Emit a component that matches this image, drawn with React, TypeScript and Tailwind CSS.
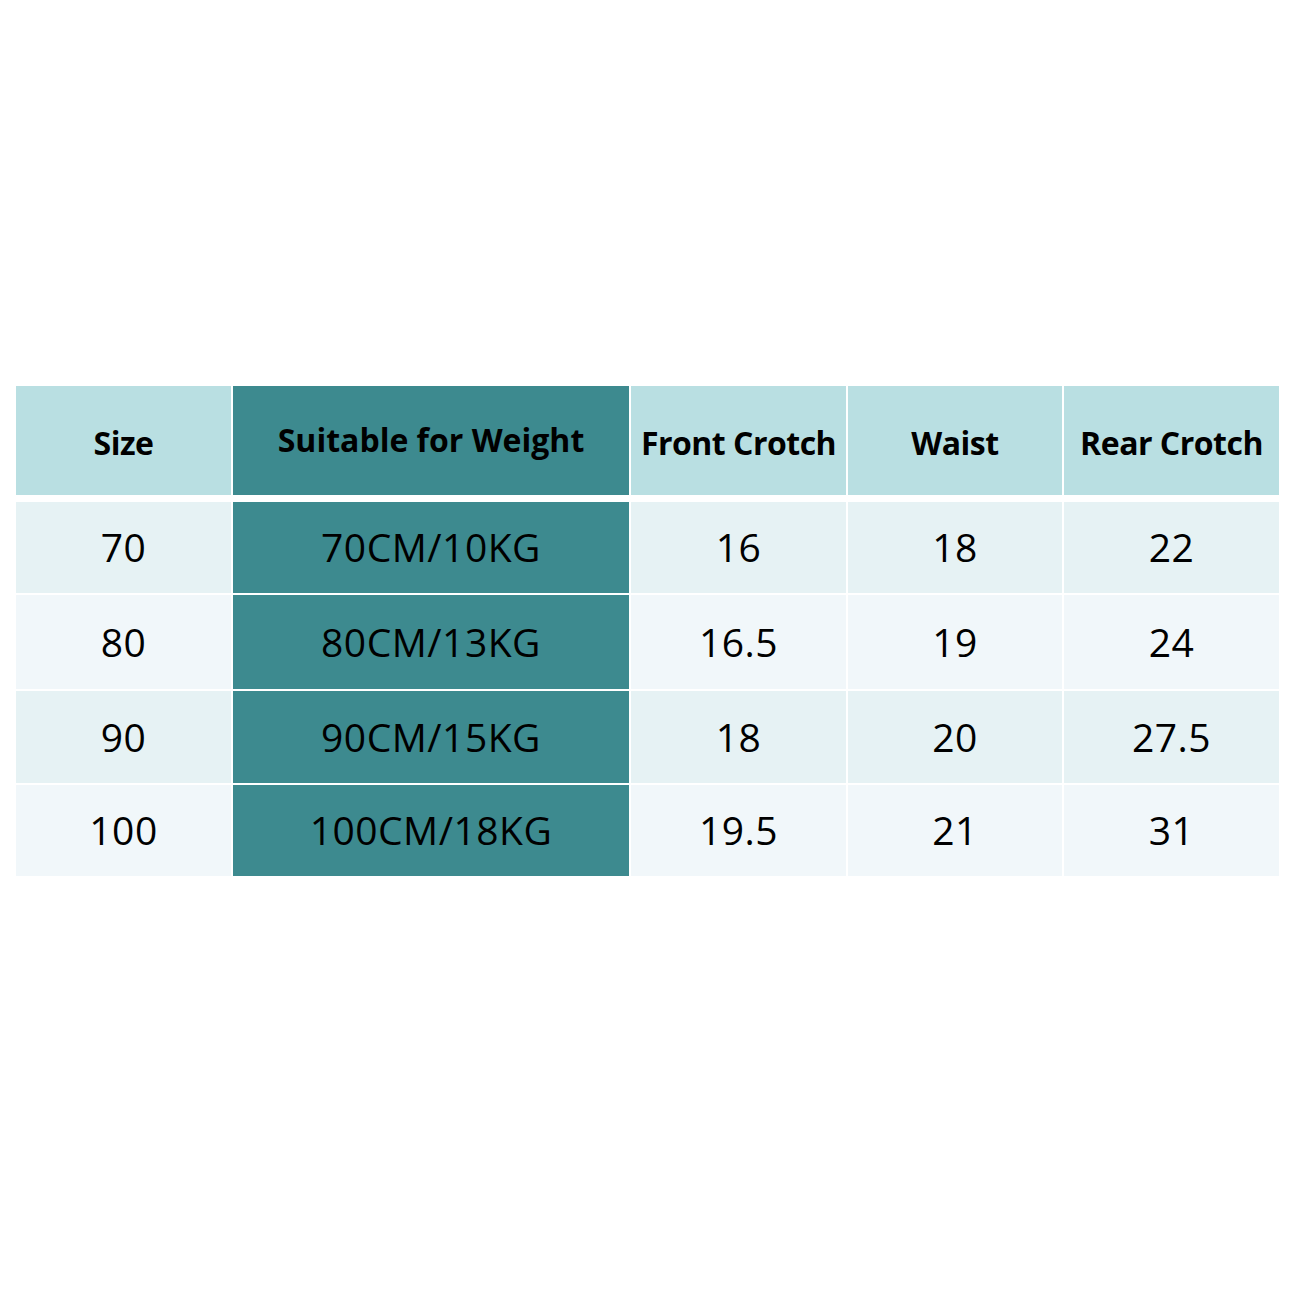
import React from "react";

const rows = [
  { h: "h-[91px]", bg: "bg-[#e6f2f4]", cells: ["70", "70CM/10KG", "16", "18", "22"] },
  { h: "h-[94px]", bg: "bg-[#f1f7fa]", cells: ["80", "80CM/13KG", "16.5", "19", "24"] },
  { h: "h-[92px]", bg: "bg-[#e6f2f4]", cells: ["90", "90CM/15KG", "18", "20", "27.5"] },
  { h: "h-[91px]", bg: "bg-[#f1f7fa]", cells: ["100", "100CM/18KG", "19.5", "21", "31"] },
];

const headers = ["Size", "Suitable for Weight", "Front Crotch", "Waist", "Rear Crotch"];

export default function App() {
  return (
    <div
      className="w-[1300px] h-[1300px] bg-white pt-[386px] pl-[16px]"
      style={{ fontFamily: '"Open Sans", "Noto Sans", sans-serif' }}
    >
      <div className="flex flex-col w-[1263px]">
        <div className="grid grid-cols-[215px_396px_215px_214px_215px] gap-x-[2px] h-[109px]">
          {headers.map((h, i) => (
            <div
              key={h}
              className={`flex items-center justify-center text-[32px] font-bold text-black ${
                i === 1 ? "bg-[#3d8a8f] pb-[2px] tracking-[0px]" : "bg-[#b9dfe2] pt-[4px] tracking-[-0.5px]"
              }`}
            >
              {h}
            </div>
          ))}
        </div>
        <div className="flex flex-col gap-[2px] mt-[7px]">
          {rows.map((r, ri) => (
            <div
              key={ri}
              className={`grid grid-cols-[215px_396px_215px_214px_215px] gap-x-[2px] ${r.h}`}
            >
              {r.cells.map((c, ci) => (
                <div
                  key={ci}
                  className={`flex items-center justify-center text-[39px] tracking-[0.5px] text-black ${
                    ci === 1 ? "bg-[#3d8a8f]" : r.bg
                  }`}
                >
                  {c}
                </div>
              ))}
            </div>
          ))}
        </div>
      </div>
    </div>
  );
}
